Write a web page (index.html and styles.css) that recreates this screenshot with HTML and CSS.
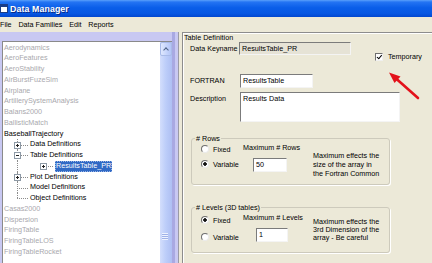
FILE: index.html
```html
<!DOCTYPE html>
<html lang="en">
	<head>
		<meta charset="UTF-8" />
		<title>Data Manager</title>
		<link rel="stylesheet" href="styles.css">
	</head>
	<body>
		<div class="window">
			<div class="titlebar">
				<span class="app-icon"></span>
				<span class="title">Data Manager</span>
			</div>
			<div class="menubar">
				<span>File</span>
				<span>Data Families</span>
				<span>Edit</span>
				<span>Reports</span>
			</div>

			<div class="main">
				<!-- Family tree: Begin -->
				<div class="left">
					<div class="tree-box">
						<div class="tree">
							<div class="node">Aerodynamics</div>
							<div class="node">AeroFeatures</div>
							<div class="node">AeroStability</div>
							<div class="node">AirBurstFuzeSim</div>
							<div class="node">Airplane</div>
							<div class="node">ArtillerySystemAnalysis</div>
							<div class="node">Balans2000</div>
							<div class="node">BallisticMatch</div>
							<div class="node open">BaseballTrajectory</div>
							<div class="kid"><span class="exp plus"></span>Data Definitions</div>
							<div class="kid"><span class="exp minus"></span>Table Definitions</div>
							<div class="kid deep"><span class="exp plus"></span><span class="sel">ResultsTable_PR</span></div>
							<div class="kid"><span class="exp plus"></span>Plot Definitions</div>
							<div class="kid">Model Definitions</div>
							<div class="kid last">Object Definitions</div>
							<div class="node">Casas2000</div>
							<div class="node">Dispersion</div>
							<div class="node">FiringTable</div>
							<div class="node">FiringTableLOS</div>
							<div class="node">FiringTableRocket</div>
						</div>
						<div class="vscroll">
							<div class="up-btn"><span class="chevron"></span></div>
							<div class="grip"></div>
						</div>
					</div>
					<div class="strip"></div>
				</div>
				<!-- Family tree: End -->

				<!-- Table definition: Begin -->
				<div class="right">
					<div class="frame">
						<div class="frame-title">Table Definition</div>
						<div class="form">
							<div class="row">
								<span class="label">Data Keyname</span>
								<span class="field disabled keyname">ResultsTable_PR</span>
								<span class="check-wrap"><span class="check"></span>Temporary</span>
							</div>
							<div class="row fortran-row">
								<span class="label">FORTRAN</span>
								<span class="field fortran">ResultsTable</span>
							</div>
							<div class="row desc-row">
								<span class="label">Description</span>
								<span class="field desc">Results Data</span>
							</div>

							<fieldset class="group rows">
								<legend># Rows</legend>
								<div class="group-body">
									<div class="opts">
										<div class="opt"><span class="radio"></span>Fixed</div>
										<div class="opt"><span class="radio on"></span>Variable</div>
									</div>
									<div class="max">
										<div class="max-label">Maximum # Rows</div>
										<span class="field num">50</span>
									</div>
									<div class="note">Maximum effects the<br>size of the array in<br>the Fortran Common</div>
								</div>
							</fieldset>

							<fieldset class="group levels">
								<legend># Levels (3D tables)</legend>
								<div class="group-body">
									<div class="opts">
										<div class="opt"><span class="radio on"></span>Fixed</div>
										<div class="opt"><span class="radio"></span>Variable</div>
									</div>
									<div class="max">
										<div class="max-label">Maximum # Levels</div>
										<span class="field num">1</span>
									</div>
									<div class="note">Maximum effects the<br>3rd Dimension of the<br>array - Be careful</div>
								</div>
							</fieldset>
						</div>
					</div>
				</div>
				<!-- Table definition: End -->
			</div>

			<svg class="arrow" width="432" height="263" viewBox="0 0 432 263">
				<line x1="418" y1="98" x2="396" y2="78.5" stroke="#e3121b" stroke-width="2.6" stroke-linecap="round" />
				<polygon points="389,72.5 400.5,76.5 394.5,83" fill="#e3121b" />
			</svg>
		</div>
	</body>
</html>
```

FILE: styles.css
```css
html, body {
	margin: 0;
	padding: 0;
}

body {
	width: 432px;
	height: 263px;
	overflow: hidden;
	background: #ece9d8;
	font-family: "Liberation Sans", Arial, sans-serif;
	font-size: 7.2px;
	color: #000;
}

.window {
	position: relative;
	width: 432px;
	height: 263px;
	overflow: hidden;
}

/* title bar */
.titlebar {
	height: 17px;
	display: flex;
	align-items: center;
	background: linear-gradient(#5aa0fb 0%, #2474f3 12%, #0a5ee9 45%, #0757e2 80%, #0247cf 100%);
}

.app-icon {
	width: 8px;
	height: 9px;
	box-sizing: border-box;
	background: #fff;
	border: 1px solid #1b3c86;
	border-top-width: 3px;
}

.title {
	margin-left: 2px;
	color: #fff;
	font-weight: bold;
	font-size: 8.8px;
	letter-spacing: 0.1px;
	text-shadow: 1px 1px 0 #0a2a84;
}

/* menu */
.menubar {
	height: 15px;
	line-height: 15px;
	display: flex;
	gap: 6.8px;
	background: #ece9d8;
}

.main {
	display: flex;
	height: 231px;
}

/* left panel */
.left {
	width: 176px;
	padding: 9px 0 0 2px;
	display: flex;
	background: #c8c8f2;
	border-right: 1px solid #9a9aa6;
}

.tree-box {
	display: flex;
	border-top: 1px solid #8a8a8a;
	border-left: 1px solid #8a8a8a;
}

.tree {
	width: 157px;
	background: #fff;
	line-height: 10.75px;
	padding-top: 0.6px;
	white-space: nowrap;
	overflow: hidden;
}

.node {
	padding-left: 1px;
	color: #a9a8ad;
}

.node.open {
	color: #000;
}

.kid {
	position: relative;
	padding-left: 27px;
	color: #000;
}

.kid::before {
	content: "";
	position: absolute;
	left: 14px;
	top: 0;
	bottom: 0;
	border-left: 1px dotted #8c8c8c;
}

.kid.last::before {
	bottom: 50%;
}

.kid::after {
	content: "";
	position: absolute;
	left: 14px;
	width: 11px;
	top: 50%;
	border-top: 1px dotted #8c8c8c;
}

.kid.deep {
	padding-left: 51px;
}

.kid.deep::after {
	left: 40px;
	width: 10px;
}

.exp {
	position: absolute;
	left: 11px;
	top: 50%;
	margin-top: -3px;
	width: 5px;
	height: 5px;
	border: 1px solid #8e9aa6;
	background: #fff;
	z-index: 1;
}

.kid.deep .exp {
	left: 37px;
}

.exp.plus {
	background:
		linear-gradient(#222, #222) center / 3px 1px no-repeat,
		linear-gradient(#222, #222) center / 1px 3px no-repeat,
		#fff;
}

.exp.minus {
	background:
		linear-gradient(#222, #222) center / 3px 1px no-repeat,
		#fff;
}

.sel {
	display: inline-block;
	padding: 0 1px;
	margin-left: 1px;
	background: #316ac5;
	color: #fff;
	outline: 1px dotted #9bb6e6;
	outline-offset: -1px;
}

/* scrollbar */
.vscroll {
	width: 12px;
	background: linear-gradient(90deg, #d3defc, #bccdf9 50%, #aebff3);
}

.up-btn {
	height: 14px;
	border: 1px solid #a9bbe8;
	border-radius: 2px;
	box-sizing: border-box;
	background: linear-gradient(90deg, #dfe8fe, #c4d3fb 60%, #b3c5f6);
	display: flex;
	justify-content: center;
	padding-top: 4px;
}

.chevron {
	width: 3px;
	height: 3px;
	border-top: 1.5px solid #4d6185;
	border-left: 1.5px solid #4d6185;
	transform: rotate(45deg);
	margin-top: 1px;
}

.grip {
	width: 6px;
	height: 7px;
	margin: 177px 0 0 2px;
	background: repeating-linear-gradient(#eef3ff 0 1px, #9fb2e8 1px 2px);
}

.strip {
	width: 3px;
	background: #a9a9e2;
	margin-top: -9px;
}

/* right panel */
.right {
	flex: 1;
	padding-left: 3px;
	background: #ece9d8;
}

.frame {
	height: 100%;
	border-top: 1px solid #8d8d8d;
	border-left: 1px solid #8d8d8d;
	box-shadow: inset 1px 1px 0 #fff;
}

.frame-title {
	line-height: 9px;
	padding-left: 1px;
}

.form {
	padding-left: 7px;
}

.row {
	display: flex;
	align-items: flex-start;
}

.label {
	width: 50px;
	line-height: 13px;
	flex: none;
}

.field {
	display: block;
	box-sizing: border-box;
	padding: 0 2px;
	line-height: 11px;
	background: #fff;
	border: 1px solid;
	border-color: #7b7b7b #f4f4f4 #f4f4f4 #7b7b7b;
	white-space: nowrap;
}

.field.disabled {
	background: #e6e3d6;
}

.keyname {
	width: 112px;
	height: 13px;
	margin-left: -1px;
}

.check-wrap {
	display: flex;
	align-items: center;
	gap: 5px;
	margin: 11px 0 0 24px;
	line-height: 8px;
}

.check {
	width: 8px;
	height: 8px;
	box-sizing: border-box;
	border: 1px solid;
	border-color: #6f6f6f #f0f0f0 #f0f0f0 #6f6f6f;
	background: #fff;
	position: relative;
}

.check::after {
	content: "";
	position: absolute;
	left: 1.5px;
	top: 0;
	width: 2px;
	height: 3.5px;
	border-right: 1.5px solid #000;
	border-bottom: 1.5px solid #000;
	transform: rotate(40deg);
}

.fortran-row {
	margin-top: 13px;
}

.fortran {
	width: 73px;
	height: 14px;
	line-height: 12px;
}

.desc-row {
	margin-top: 4px;
}

.desc {
	width: 160px;
	height: 30px;
	line-height: 11px;
}

/* option groups */
.group {
	margin: 11.5px 0 0 1px;
	padding: 0;
	width: 199px;
	box-sizing: border-box;
	border: 1px solid #cdcabc;
	border-radius: 3px;
	box-shadow: 1px 1px 0 #fff;
}

.group.rows {
	height: 51.5px;
}

.group.levels {
	margin-top: 17.5px;
	height: 50.5px;
}

.group legend {
	padding: 0 1px;
	margin-left: 3px;
	line-height: 9px;
}

.group-body {
	display: flex;
	padding-left: 10px;
}

.opts {
	width: 41px;
	margin-top: 2px;
	display: flex;
	flex-direction: column;
	gap: 6px;
}

.levels .opts {
	margin-top: 4px;
	gap: 8px;
}

.opt {
	display: flex;
	align-items: center;
	gap: 4px;
	line-height: 9px;
	margin-left: -1px;
}

.radio {
	width: 8px;
	height: 8px;
	box-sizing: border-box;
	border-radius: 50%;
	border: 1px solid;
	border-color: #6f6f6f #eaeaea #eaeaea #6f6f6f;
	background: #fff;
}

.radio.on {
	background: radial-gradient(circle, #111 0 1.5px, #fff 2px);
}

.max {
	width: 70px;
}

.max-label {
	line-height: 9px;
}

.levels .max-label {
	margin-top: 1px;
}

.num {
	width: 34px;
	height: 14px;
	line-height: 12px;
	margin: 6.5px 0 0 10px;
}

.levels .num {
	width: 32px;
	margin-left: 13px;
}

.note {
	margin-top: 8px;
	line-height: 9px;
	white-space: nowrap;
}

.levels .note {
	margin-top: 6.5px;
	line-height: 8px;
}

/* annotation */
.arrow {
	position: absolute;
	left: 0;
	top: 0;
	pointer-events: none;
}
```
